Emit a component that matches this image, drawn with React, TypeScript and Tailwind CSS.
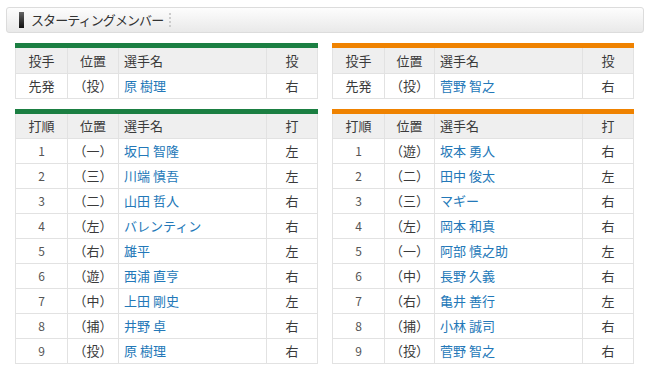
const pitchers = {
  home: { role: '先発', pos: '（投）', name: '原 樹理', hand: '右' },
  away: { role: '先発', pos: '（投）', name: '菅野 智之', hand: '右' },
};

const homeBatters = [
  ['（一）', '坂口 智隆', '左'],
  ['（三）', '川端 慎吾', '左'],
  ['（二）', '山田 哲人', '右'],
  ['（左）', 'バレンティン', '右'],
  ['（右）', '雄平', '左'],
  ['（遊）', '西浦 直亨', '右'],
  ['（中）', '上田 剛史', '左'],
  ['（捕）', '井野 卓', '右'],
  ['（投）', '原 樹理', '右'],
];

const awayBatters = [
  ['（遊）', '坂本 勇人', '右'],
  ['（二）', '田中 俊太', '左'],
  ['（三）', 'マギー', '右'],
  ['（左）', '岡本 和真', '右'],
  ['（一）', '阿部 慎之助', '左'],
  ['（中）', '長野 久義', '右'],
  ['（右）', '亀井 善行', '左'],
  ['（捕）', '小林 誠司', '右'],
  ['（投）', '菅野 智之', '右'],
];

const cell = 'border border-[#e2e2e2] h-[25px] p-0';

function PitcherTable({ p, bar, posW }: { p: typeof pitchers.home; bar: string; posW: string }) {
  return (
    <div>
      <div className={`h-[5px] ${bar}`} />
      <table className="w-full border-collapse table-fixed text-[13px] text-[#3a3a3a]">
        <colgroup>
          <col className="w-[52px]" />
          <col className={posW} />
          <col />
          <col className="w-[51px]" />
        </colgroup>
        <tbody>
          <tr className="bg-[#efefef]">
            <td className={`${cell} border-t-0 text-center`}>投手</td>
            <td className={`${cell} border-t-0 text-center`}>位置</td>
            <td className={`${cell} border-t-0 pl-[5px]`}>選手名</td>
            <td className={`${cell} border-t-0 text-center`}>投</td>
          </tr>
          <tr>
            <td className={`${cell} text-center`}>{p.role}</td>
            <td className={`${cell} text-center`}>{p.pos}</td>
            <td className={`${cell} pl-[5px] text-[#2378b8]`}>{p.name}</td>
            <td className={`${cell} text-center`}>{p.hand}</td>
          </tr>
        </tbody>
      </table>
    </div>
  );
}

function BatterTable({ rows, bar, posW }: { rows: string[][]; bar: string; posW: string }) {
  return (
    <div>
      <div className={`h-[5px] ${bar}`} />
      <table className="w-full border-collapse table-fixed text-[13px] text-[#3a3a3a]">
        <colgroup>
          <col className="w-[52px]" />
          <col className={posW} />
          <col />
          <col className="w-[51px]" />
        </colgroup>
        <tbody>
          <tr className="bg-[#efefef]">
            <td className={`${cell} border-t-0 text-center`}>打順</td>
            <td className={`${cell} border-t-0 text-center`}>位置</td>
            <td className={`${cell} border-t-0 pl-[5px]`}>選手名</td>
            <td className={`${cell} border-t-0 text-center`}>打</td>
          </tr>
          {rows.map((r, i) => (
            <tr key={i}>
              <td className={`${cell} text-center text-[12px] text-[#555]`}>{i + 1}</td>
              <td className={`${cell} text-center`}>{r[0]}</td>
              <td className={`${cell} pl-[5px] text-[#2378b8]`}>{r[1]}</td>
              <td className={`${cell} text-center`}>{r[2]}</td>
            </tr>
          ))}
        </tbody>
      </table>
    </div>
  );
}

export default function App() {
  return (
    <div
      className="w-[650px] h-[374px] bg-white pt-[7px]"
      style={{ fontFamily: '"Noto Sans CJK JP", "Liberation Sans", sans-serif' }}
    >
      {/* title bar */}
      <div className="mx-[6px] h-[26px] rounded-[3px] border border-[#dcdcdc] bg-gradient-to-b from-[#fdfdfd] to-[#e9e9e9] flex items-center">
        <div className="ml-[12px] w-[5px] h-[16px] bg-gradient-to-b from-[#666] to-[#111]" />
        <span className="ml-[7px] text-[13px] text-[#333] tracking-[-0.9px]">スターティングメンバー</span>
        <div className="ml-[6px] flex flex-col gap-[2px]">
          <span className="w-[2px] h-[2px] bg-[#ccc]" />
          <span className="w-[2px] h-[2px] bg-[#ccc]" />
          <span className="w-[2px] h-[2px] bg-[#ccc]" />
          <span className="w-[2px] h-[2px] bg-[#ccc]" />
        </div>
      </div>

      <div className="mt-[10px] pl-[15px] flex gap-[14px]">
        <div className="w-[303px] flex flex-col gap-[10px]">
          <PitcherTable p={pitchers.home} bar="bg-[#1b7f42]" posW="w-[51px]" />
          <BatterTable rows={homeBatters} bar="bg-[#1b7f42]" posW="w-[51px]" />
        </div>
        <div className="w-[302px] flex flex-col gap-[10px]">
          <PitcherTable p={pitchers.away} bar="bg-[#ef8200]" posW="w-[50px]" />
          <BatterTable rows={awayBatters} bar="bg-[#ef8200]" posW="w-[50px]" />
        </div>
      </div>
    </div>
  );
}
